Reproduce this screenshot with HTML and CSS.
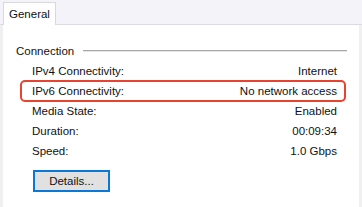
FILE: index.html
```html
<!DOCTYPE html>
<html lang="en">
<head>
  <meta charset="UTF-8">
  <title>Ethernet Status</title>
  <link rel="stylesheet" href="styles.css">
</head>
<body>

<div class="tabs">
  <div class="tab">General</div>
</div>

<div class="page">
  <div class="group-title">
    <span>Connection</span>
    <div class="rule"></div>
  </div>

  <div class="rows">
    <div class="row"><span>IPv4 Connectivity:</span><span>Internet</span></div>
    <div class="row marked"><span>IPv6 Connectivity:</span><span>No network access</span></div>
    <div class="row"><span>Media State:</span><span>Enabled</span></div>
    <div class="row"><span>Duration:</span><span>00:09:34</span></div>
    <div class="row"><span>Speed:</span><span>1.0 Gbps</span></div>
  </div>

  <button class="btn">Details...</button>
</div>

</body>
</html>
```

FILE: styles.css
```css
body {
  margin: 0;
  font-family: 'Liberation Sans', Arial, sans-serif;
  font-size: 11.5px;
  color: #111;
  background: #f0f0f0;
  width: 362px;
  height: 207px;
  overflow: hidden;
}

.tabs {
  display: flex;
  align-items: flex-end;
  height: 25px;
  padding-left: 3px;
  background: #f4f3f9;
  border-bottom: 1px solid #dcdbe3;
  box-sizing: border-box;
}

.tab {
  background: white;
  border: 1px solid #d9d9d9;
  border-bottom: none;
  height: 23px;
  margin-bottom: -1px;
  padding: 0 5px;
  line-height: 22px;
  box-sizing: border-box;
}

.page {
  background: white;
  margin-left: 3px;
  margin-right: 3px;
  height: 182px;
  padding-top: 19px;
  box-sizing: border-box;
}

.group-title {
  display: flex;
  align-items: center;
  padding-left: 13px;
  padding-right: 12px;
  height: 14px;
}

.rule {
  flex: 1;
  height: 1px;
  margin-left: 9px;
  background: #a9a9a9;
  border-bottom: 1px solid #e4e4e4;
}

.rows {
  margin: 3px 13px 0 17px;
}

.row {
  display: flex;
  justify-content: space-between;
  height: 20px;
  line-height: 20px;
  padding: 0 7px 0 10px;
  border: 2px solid transparent;
  border-width: 0 2px;
}

.row.marked {
  box-sizing: border-box;
  height: 22px;
  line-height: 18px;
  margin: -1px 0;
  border: 2px solid #e8432e;
  border-radius: 5px;
}

.btn {
  margin: 9px 0 0 30px;
  width: 77px;
  height: 22px;
  background: #e1e1e1;
  border: 2px solid #0a78d7;
  font-family: inherit;
  font-size: 11.5px;
  color: #111;
  padding: 0;
}
```
